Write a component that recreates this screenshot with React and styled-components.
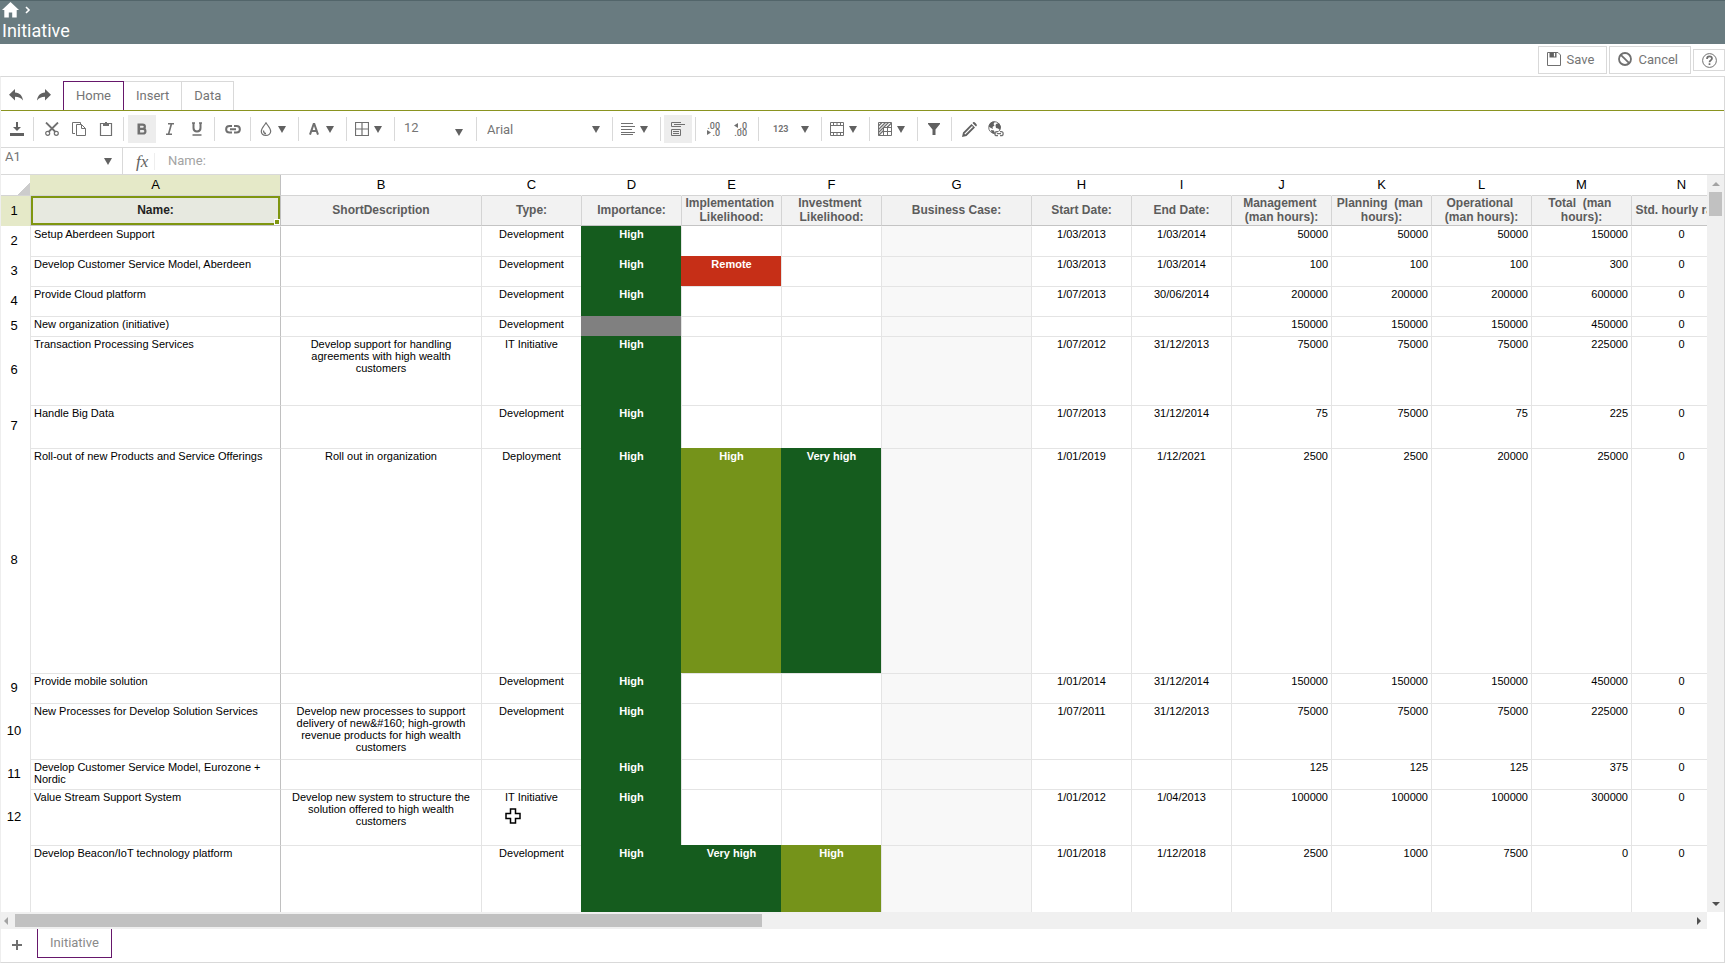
import React, { useState } from "react";
import styled, { createGlobalStyle } from "styled-components";

const GlobalStyle = createGlobalStyle`
  * {
    box-sizing: border-box;
  }

  body {
    margin: 0;
    background: #ffffff;
    color: #757575;
    font-family: Roboto, sans-serif;
    font-size: 13px;
  }

  button,
  input,
  select {
    margin: 0;
    padding: 0;
    border: 0;
    border-radius: 0;
    background: none;
    color: inherit;
    font: inherit;
  }
`;

const Page = styled.div`
  display: flex;
  flex-direction: column;
  height: 100vh;
  margin-right: 1px;
`;

const TopBar = styled.header`
  height: 44px;
  flex: none;
  background: #697b80;
  border-top: 1px solid #52656a;
  color: #ffffff;
`;

const Breadcrumb = styled.nav`
  display: flex;
  align-items: center;
  gap: 6px;
  height: 17px;
  padding-left: 2px;

  a {
    display: flex;
    color: inherit;
  }
`;

const Title = styled.h1`
  margin: 0;
  padding-left: 2px;
  font-size: 18px;
  font-weight: 400;
  line-height: 26px;
`;

const ActionBar = styled.div`
  display: flex;
  flex: none;
  align-items: center;
  justify-content: flex-end;
  gap: 2px;
  height: 32px;
`;

const ActionButton = styled.button`
  display: flex;
  align-items: center;
  gap: 6px;
  height: 28px;
  padding: 0 12px 2px 8px;
  border: 1px solid #d9d9d9;
`;

const HelpButton = styled.button`
  display: flex;
  align-items: center;
  justify-content: center;
  width: 32px;
  height: 22px;
  border: 1px solid #d9d9d9;
`;

const Spreadsheet = styled.main`
  display: flex;
  flex: 1;
  flex-direction: column;
  min-height: 0;
  border: 1px solid #d9d9d9;
  border-left-color: #eeeeee;
`;

const Ribbon = styled.div`
  display: flex;
  flex: none;
  align-items: flex-end;
  height: 34px;
  padding-left: 1px;
  border-bottom: 1px solid #8a9420;
`;

const RibbonIcon = styled.button`
  display: flex;
  align-items: center;
  justify-content: center;
  width: 28px;
  height: 31px;
`;

const RibbonTabs = styled.div`
  display: flex;
  margin-left: 5px;
`;

const RibbonTab = styled.button`
  height: 29px;
  padding: 0 12px 2px;
  border: 1px solid ${(props) => (props.$active ? "#66176b" : "#d9d9d9")};
  border-bottom: 0;
  ${(props) => !props.$active && "border-left: 0;"}
`;

const Toolbar = styled.div`
  display: flex;
  flex: none;
  align-items: center;
  height: 37px;
  border-bottom: 1px solid #d9d9d9;
`;

const Group = styled.div`
  display: flex;
  align-items: center;
  justify-content: center;
  height: 24px;
  padding: ${(props) => props.$pad || "0 3px"};
  border-right: ${(props) => (props.$last ? "0" : "1px solid #d9d9d9")};
`;

const Tool = styled.button`
  display: flex;
  align-items: center;
  justify-content: center;
  width: 27px;
  height: 28px;
  ${(props) => props.$active && "width: 28px; background: #ededed;"}
`;

const DropTool = styled.button`
  display: flex;
  align-items: center;
  gap: 5px;
  height: 28px;
  padding: 0 12px 0 8px;
`;

const NumberTool = styled(DropTool)`
  gap: 12px;
  padding: 0 12px 0 14px;
  font-size: 9px;
  font-weight: 700;
`;

const Combo = styled.label`
  display: grid;
  align-items: center;
  width: ${(props) => props.$width};
  height: 100%;

  select {
    grid-area: 1 / 1;
    width: 100%;
    padding: ${(props) => props.$pad};
    appearance: none;
    outline: none;
  }

  svg {
    grid-area: 1 / 1;
    justify-self: end;
    margin: ${(props) => props.$arrow};
    pointer-events: none;
  }
`;

const FormulaBar = styled.div`
  display: flex;
  flex: none;
  align-items: center;
  height: 27px;
  border-bottom: 1px solid #d9d9d9;
`;

const NameBox = styled.div`
  height: 100%;
  border-right: 1px solid #d9d9d9;
`;

const FxLabel = styled.label`
  width: 32px;
  padding-left: 13px;
  border-right: 1px solid #eeeeee;
  color: #616161;
  font-family: "Liberation Serif", serif;
  font-size: 17px;
  font-style: italic;
  line-height: 17px;
`;

const FormulaInput = styled.input`
  flex: 1;
  min-width: 0;
  padding: 0 0 1px 13px;
  color: #a3a3a3;
  outline: none;
`;

const SheetArea = styled.div`
  display: grid;
  flex: 1;
  grid-template-columns: minmax(0, 1fr) 17px;
  grid-template-rows: minmax(0, 1fr) 17px;
  min-height: 0;
`;

const SheetViewport = styled.div`
  position: relative;
  overflow: auto;
  scrollbar-width: none;
`;

const SheetTable = styled.table`
  width: 1730px;
  table-layout: fixed;
  border-collapse: separate;
  border-spacing: 0;
  color: #000000;
  font-family: "Liberation Sans", Arial, sans-serif;
  font-size: 11px;
  line-height: 12px;
`;

const ColumnHeader = styled.th`
  height: 21px;
  padding: 0;
  border-bottom: 1px solid #d4d4d4;
  border-left: 1px solid ${(props) => (props.$afterFreeze ? "#c0c0c0" : "transparent")};
  background: ${(props) => (props.$active ? "#e5e9c8" : "#ffffff")};
  font-size: 13px;
  font-weight: 400;
`;

const Corner = styled.td`
  height: 21px;
  padding: 0;
  border-bottom: 1px solid #d4d4d4;
  background: linear-gradient(135deg, transparent 50%, #cccccc 50%) right bottom / 12px 12px no-repeat;
`;

const RowHeader = styled.th`
  padding: 0 3px 1px 0;
  background: ${(props) => (props.$active ? "#e5e9c8" : "#ffffff")};
  font-size: 13px;
  font-weight: 400;
  vertical-align: middle;
`;

const Cell = styled.td`
  height: ${(props) => props.$height}px;
  padding: 1px 3px 0;
  border-top: 1px solid ${(props) => (props.$fill || props.$first ? "transparent" : "#e4e4e4")};
  border-left: 1px solid
    ${(props) => (props.$fill ? "transparent" : props.$afterFreeze ? "#c0c0c0" : "#e4e4e4")};
  background: ${(props) => props.$fill || (props.$readonly ? "#f8f8f8" : "#ffffff")};
  color: ${(props) => (props.$fill ? "#ffffff" : "#000000")};
  font-weight: ${(props) => (props.$fill ? 700 : 400)};
  text-align: ${(props) => props.$align || "center"};
  vertical-align: top;
  white-space: pre-line;
`;

const FieldCell = styled.td`
  position: relative;
  height: 30px;
  padding: 0 0 1px;
  border-bottom: 1px solid #c4c4c4;
  border-left: 1px solid ${(props) => (props.$afterFreeze ? "#c0c0c0" : "#d4d4d4")};
  background: ${(props) => (props.$active ? "#e7e9e0" : "#f2f2f2")};
  color: ${(props) => (props.$active ? "#222222" : "#5c5c5c")};
  font-size: 12px;
  font-weight: 700;
  line-height: 14px;
  text-align: center;
  vertical-align: middle;
  white-space: pre;
`;

const Selection = styled.div`
  position: absolute;
  inset: 0;
  border: 2px solid #7f9610;

  &::after {
    content: "";
    position: absolute;
    right: -2px;
    bottom: -2px;
    width: 4px;
    height: 4px;
    border: 1px solid #ffffff;
    background: #7f9610;
  }
`;

const CellCursor = styled.svg`
  position: absolute;
  top: 633px;
  left: 504px;
  pointer-events: none;
`;

const ScrollTrack = styled.div`
  display: flex;
  flex-direction: ${(props) => (props.$vertical ? "column" : "row")};
  align-items: center;
  background: #f0f0f0;
`;

const ScrollButton = styled.button`
  display: flex;
  flex: none;
  align-items: center;
  justify-content: center;
  width: ${(props) => (props.$vertical ? "17px" : "14px")};
  height: 17px;
`;

const ScrollThumb = styled.div`
  width: ${(props) => (props.$vertical ? "13px" : "43.8%")};
  height: ${(props) => (props.$vertical ? "24px" : "13px")};
  margin-bottom: ${(props) => (props.$vertical ? "auto" : "0")};
  margin-right: ${(props) => (props.$vertical ? "0" : "auto")};
  background: #c1c1c1;
`;

const SheetTabs = styled.footer`
  display: flex;
  flex: none;
  height: 33px;
`;

const AddSheet = styled.button`
  display: flex;
  align-items: center;
  justify-content: center;
  width: 32px;
  height: 31px;
  margin-right: 4px;
`;

const SheetTab = styled.button`
  height: 29px;
  padding: 0 12px 2px;
  border: 1px solid #66176b;
  border-top: 0;
  color: #8a8a8a;
`;

const Icon = ({ size = 14, box = 14, children }) => (
  <svg
    width={size}
    height={size}
    viewBox={`0 0 ${box} ${box}`}
    fill="none"
    stroke="#707070"
    strokeWidth="1"
    aria-hidden="true"
  >
    {children}
  </svg>
);

const Arrow = () => (
  <svg width="8" height="7" viewBox="0 0 8 7" fill="#616161" aria-hidden="true">
    <path d="M0 0h8L4 7z" />
  </svg>
);

const ScrollArrow = ({ d, color = "#505050" }) => (
  <svg width="8" height="8" viewBox="0 0 8 8" fill={color} aria-hidden="true">
    <path d={d} />
  </svg>
);

const icons = {
  undo: (
    <Icon>
      <path fill="#616161" stroke="none" d="M6 1v3.500c5 .4 7.300 3 8 8-2-2.700-4.200-3.800-8-3.800V12.500L0 6.700z" />
    </Icon>
  ),
  redo: (
    <Icon>
      <path fill="#616161" stroke="none" d="M8 1v3.500c-5 .4-7.300 3-8 8 2-2.700 4.200-3.800 8-3.800V12.500l6-5.800z" />
    </Icon>
  ),
  download: (
    <Icon>
      <path fill="#616161" stroke="none" d="M0 11h14v3H0zM6 0h2v5h3L7 9 3 5h3z" />
    </Icon>
  ),
  cut: (
    <Icon>
      <path strokeWidth="1.800" d="M1 .5l9.500 9.500M13 .5L3.500 10" />
      <circle cx="2.700" cy="11.300" r="2" strokeWidth="1.200" />
      <circle cx="11.300" cy="11.300" r="2" strokeWidth="1.200" />
    </Icon>
  ),
  copy: (
    <Icon>
      <path d="M3 11.500H.5V.5h8v1.500M4.500 2.500h5l4 4v7h-9zM9.500 2.500v4h4" />
    </Icon>
  ),
  paste: (
    <Icon>
      <path d="M4 1.500H1.500v12h11v-12H10" strokeWidth="1.200" />
      <path fill="#707070" stroke="none" d="M4 1h2V0h2v1h2v3H4z" />
    </Icon>
  ),
  bold: (
    <Icon>
      <path strokeWidth="2.200" d="M3.600 2.600h4c3 0 3 4.200 0 4.200h-4 4.400c3.200 0 3.200 4.700 0 4.700H3.600zM4 1.500v11" />
    </Icon>
  ),
  italic: (
    <Icon>
      <path strokeWidth="1.600" d="M5 1.800h6M3 12.200h6M8.400 2L5.600 12" />
    </Icon>
  ),
  underline: (
    <Icon>
      <path strokeWidth="2" d="M3.500 1v5c0 4.600 7 4.600 7 0V1" />
      <path strokeWidth="1.400" d="M2.500 13h9M2 1h3M9 1h3" />
    </Icon>
  ),
  link: (
    <Icon size={16} box={16}>
      <path strokeWidth="2" d="M7 5H4.500C0 5 0 11.500 4.500 11.500H7M9 5h2.500c4.500 0 4.500 6.500 0 6.500H9M5 8.200h6" />
    </Icon>
  ),
  fill: (
    <Icon>
      <path strokeWidth="1.200" d="M7 .8C5 4 2.300 6.500 2.300 9.200c0 5.600 9.400 5.600 9.400 0C11.700 6.500 9 4 7 .8zM4.500 8.500c0 2 1 3 2.500 3.200" />
    </Icon>
  ),
  color: (
    <Icon>
      <path strokeWidth="2" d="M3 12.700L6.700 2h.6L11 12.700M4.300 9h5.400" />
    </Icon>
  ),
  borders: (
    <Icon>
      <path d="M.5.5h13v13H.5zM7 .5v13M.5 7h13" strokeWidth="1.200" />
    </Icon>
  ),
  align: (
    <Icon>
      <path d="M0 1.500h12M0 4.500h14M0 7.500h11M0 10.500h14M0 12.500h12" />
    </Icon>
  ),
  wrap: (
    <Icon>
      <path d="M10 .5H.5v4H10M3 2.500h11M.5 7.500h9v6h-9zM2 9.500h6M2 11.500h6" />
    </Icon>
  ),
  filmstrip: (
    <Icon>
      <path d="M.5.500h13v13H.5zM.5 3.500h13M.5 10.500h13M3.500.5v3M7 .5v3M10.500.5v3M3.500 10.500v3M7 10.500v3M10.500 10.500v3" />
    </Icon>
  ),
  conditional: (
    <Icon>
      <path d="M.5.500h13v13H.5zM5.500 5.500v8M5.500 5.500h8M9.500 4v9.500M5 9.500h8.500" />
      <path strokeWidth="1.300" d="M.5 4l3.500-3.500M.5 7.500l7-7M.5 10.500l5-5M.5 13.500l5-5M5.500 5.500l5-5M9 5.500l4.500-4.500" />
    </Icon>
  ),
  filter: (
    <Icon>
      <path fill="#616161" stroke="none" d="M1 1h12v1L8.500 7.500V13H5.500V7.500L1 2z" />
    </Icon>
  ),
  pencil: (
    <Icon size={15} box={15}>
      <path fill="#616161" stroke="none" d="M0 15l1-4.500L9.500 2 13 5.500 4.500 14zM10.500 1l.7-.7c1-1 4.500 2.500 3.500 3.500L14 4.500z" />
      <path stroke="#ffffff" strokeWidth="1.200" d="M2.800 12.200l7.700-7.700" />
    </Icon>
  ),
  globe: (
    <Icon size={16} box={16}>
      <circle cx="6.500" cy="6.500" r="5.800" />
      <path fill="#616161" stroke="none" d="M1 4c1-3 4-4 6-3.500L5.500 3l1 1.500L4.500 6 5 8 3 7 1 6zM8 3l3-1 2 4-1 3-2-1.500L8 7 7.500 4.500zM3 9l3 .5L7 13C5 13 3 11.500 3 9z" />
      <path stroke="#ffffff" strokeWidth="4" d="M8.500 12.800h4.500" />
      <path strokeWidth="1.200" d="M10 10.700H8.800c-2.600 0-2.600 4 0 4H10M12 10.700h1.200c2.600 0 2.600 4 0 4H12M9 12.700h4" />
    </Icon>
  ),
  save: (
    <Icon>
      <path d="M.5.500h10.500l2.500 2.500v10.500H.5z" />
      <path fill="#616161" stroke="none" d="M2.500.5h7v5h-7z" />
      <path stroke="#ffffff" strokeWidth="1.200" d="M7.500 1v3.500" />
    </Icon>
  ),
  cancel: (
    <Icon>
      <circle cx="7" cy="7" r="6" strokeWidth="1.800" />
      <path strokeWidth="1.800" d="M2.800 2.800l8.400 8.400" />
    </Icon>
  ),
  help: (
    <Icon size={15} box={15}>
      <circle cx="7.500" cy="7.500" r="6.900" />
      <path strokeWidth="1.700" d="M5 6c0-3.600 5-3.200 5-.4C10 7.300 7.500 7.200 7.500 9.200M7.500 10.200v1.800" />
    </Icon>
  ),
  plus: (
    <Icon size={10} box={10}>
      <path strokeWidth="2" d="M5 0v10M0 5h10" />
    </Icon>
  ),
};

// ".00" over ".0" (and back) with a small pointer next to the short value
const DecimalSvg = styled.svg`
  font-family: Roboto, sans-serif;
  font-size: 9px;
  font-weight: 500;
`;

const DecimalIcon = ({ increase }) => (
  <DecimalSvg width="14" height="15" viewBox="0 0 14 15" fill="#707070" aria-hidden="true">
    <text x="13" y="7" textAnchor="end">{increase ? ".0" : ".00"}</text>
    <text x="13" y="14" textAnchor="end">{increase ? ".00" : ".0"}</text>
    <path d={increase ? "M4 1v5L0 3.500z" : "M0 8v5l4-2.500z"} />
  </DecimalSvg>
);

const GREEN = "#155c1e";
const OLIVE = "#75931a";
const RED = "#c62f17";
const GREY = "#808080";

const levels = {
  High: GREEN,
  "Very high": GREEN,
  Remote: RED,
};

const columns = [
  { id: "A", width: 250, field: "Name:", align: "left" },
  { id: "B", width: 201, field: "ShortDescription" },
  { id: "C", width: 100, field: "Type:" },
  { id: "D", width: 100, field: "Importance:" },
  { id: "E", width: 100, field: "Implementation\u00a0\nLikelihood:" },
  { id: "F", width: 100, field: "Investment\u00a0\nLikelihood:" },
  { id: "G", width: 150, field: "Business Case:", readonly: true },
  { id: "H", width: 100, field: "Start Date:" },
  { id: "I", width: 100, field: "End Date:" },
  { id: "J", width: 100, field: "Management\u00a0\n(man hours):", align: "right" },
  { id: "K", width: 100, field: "Planning  (man\u00a0\nhours):", align: "right" },
  { id: "L", width: 100, field: "Operational\u00a0\n(man hours):", align: "right" },
  { id: "M", width: 100, field: "Total  (man\u00a0\nhours):", align: "right" },
  { id: "N", width: 100, field: "Std. hourly rate:" },
];

const rows = [
  { height: 30, values: ["Setup Aberdeen Support", "", "Development", "High", "", "", "", "1/03/2013", "1/03/2014", 50000, 50000, 50000, 150000, 0] },
  { height: 30, values: ["Develop Customer Service Model, Aberdeen", "", "Development", "High", "Remote", "", "", "1/03/2013", "1/03/2014", 100, 100, 100, 300, 0] },
  { height: 30, values: ["Provide Cloud platform", "", "Development", "High", "", "", "", "1/07/2013", "30/06/2014", 200000, 200000, 200000, 600000, 0] },
  { height: 20, values: ["New organization (initiative)", "", "Development", "", "", "", "", "", "", 150000, 150000, 150000, 450000, 0], fills: { D: GREY } },
  { height: 69, values: ["Transaction Processing Services", "Develop support for handling\nagreements with high wealth\ncustomers", "IT Initiative", "High", "", "", "", "1/07/2012", "31/12/2013", 75000, 75000, 75000, 225000, 0] },
  { height: 43, values: ["Handle Big Data", "", "Development", "High", "", "", "", "1/07/2013", "31/12/2014", 75, 75000, 75, 225, 0] },
  { height: 225, values: ["Roll-out of new Products and Service Offerings", "Roll out in organization", "Deployment", "High", "High", "Very high", "", "1/01/2019", "1/12/2021", 2500, 2500, 20000, 25000, 0], fills: { E: OLIVE } },
  { height: 30, values: ["Provide mobile solution", "", "Development", "High", "", "", "", "1/01/2014", "31/12/2014", 150000, 150000, 150000, 450000, 0] },
  { height: 56, values: ["New Processes for Develop Solution Services", "Develop new processes to support\ndelivery of new&#160; high-growth\nrevenue products for high wealth\ncustomers", "Development", "High", "", "", "", "1/07/2011", "31/12/2013", 75000, 75000, 75000, 225000, 0] },
  { height: 30, values: ["Develop Customer Service Model, Eurozone +\nNordic", "", "", "High", "", "", "", "", "", 125, 125, 125, 375, 0] },
  { height: 56, values: ["Value Stream Support System", "Develop new system to structure the\nsolution offered to high wealth\ncustomers", "IT Initiative", "High", "", "", "", "1/01/2012", "1/04/2013", 100000, 100000, 100000, 300000, 0] },
  { height: 225, values: ["Develop Beacon/IoT technology platform", "", "Development", "High", "Very high", "High", "", "1/01/2018", "1/12/2018", 2500, 1000, 7500, 0, 0], fills: { F: OLIVE } },
];

const DropButton = ({ label, icon }) => (
  <DropTool type="button" aria-label={label}>
    {icon}
    <Arrow />
  </DropTool>
);

const Sheet = () => (
  <SheetTable>
    <colgroup>
      <col style={{ width: 29 }} />
      {columns.map((column) => (
        <col key={column.id} style={{ width: column.width }} />
      ))}
    </colgroup>
    <thead>
      <tr>
        <Corner />
        {columns.map(({ id }) => (
          <ColumnHeader key={id} scope="col" $active={id === "A"} $afterFreeze={id === "B"}>
            {id}
          </ColumnHeader>
        ))}
      </tr>
    </thead>
    <tbody>
      <tr>
        <RowHeader scope="row" $active>
          1
        </RowHeader>
        {columns.map(({ id, field }) => (
          <FieldCell key={id} $active={id === "A"} $afterFreeze={id === "B"}>
            {field}
            {id === "A" && <Selection />}
          </FieldCell>
        ))}
      </tr>
      {rows.map(({ height, values, fills = {} }, rowIndex) => (
        <tr key={values[0]}>
          <RowHeader scope="row">{rowIndex + 2}</RowHeader>
          {columns.map(({ id, align, readonly }, index) => (
            <Cell
              key={id}
              $height={height}
              $align={align}
              $readonly={readonly}
              $first={rowIndex === 0}
              $afterFreeze={id === "B"}
              $fill={fills[id] || levels[values[index]]}
            >
              {values[index]}
            </Cell>
          ))}
        </tr>
      ))}
    </tbody>
  </SheetTable>
);

const App = () => {
  const [activeTab, setActiveTab] = useState("Home");

  return (
    <>
      <GlobalStyle />
      <Page>
        <TopBar>
          <Breadcrumb aria-label="Breadcrumb">
            <a href="#home" aria-label="Home">
              <svg width="17" height="16" viewBox="0 0 17 16" fill="#ffffff" aria-hidden="true">
                <path d="M8.500 0L17 8h-2.300v7.500h-4.500v-5H6.800v5H2.300V8H0z" />
              </svg>
            </a>
            <svg width="6" height="8" viewBox="0 0 6 8" fill="none" stroke="#ffffff" strokeWidth="1.600" aria-hidden="true">
              <path d="M1 1l3 3-3 3" />
            </svg>
          </Breadcrumb>
          <Title>Initiative</Title>
        </TopBar>

        <ActionBar>
          <ActionButton type="button">
            {icons.save}
            Save
          </ActionButton>
          <ActionButton type="button">
            {icons.cancel}
            Cancel
          </ActionButton>
          <HelpButton type="button" aria-label="Help">
            {icons.help}
          </HelpButton>
        </ActionBar>

        <Spreadsheet>
          <Ribbon>
            <RibbonIcon type="button" aria-label="Undo">{icons.undo}</RibbonIcon>
            <RibbonIcon type="button" aria-label="Redo">{icons.redo}</RibbonIcon>
            <RibbonTabs>
              {["Home", "Insert", "Data"].map((tab) => (
                <RibbonTab
                  key={tab}
                  type="button"
                  $active={tab === activeTab}
                  onClick={() => setActiveTab(tab)}
                >
                  {tab}
                </RibbonTab>
              ))}
            </RibbonTabs>
          </Ribbon>

          <Toolbar>
            <Group $pad="0 3px 0 2px">
              <Tool type="button" aria-label="Download">{icons.download}</Tool>
            </Group>
            <Group $pad="0 4px">
              <Tool type="button" aria-label="Cut">{icons.cut}</Tool>
              <Tool type="button" aria-label="Copy">{icons.copy}</Tool>
              <Tool type="button" aria-label="Paste">{icons.paste}</Tool>
            </Group>
            <Group $pad="0 4px">
              <Tool type="button" aria-label="Bold" $active>{icons.bold}</Tool>
              <Tool type="button" aria-label="Italic">{icons.italic}</Tool>
              <Tool type="button" aria-label="Underline">{icons.underline}</Tool>
            </Group>
            <Group $pad="0 4px">
              <Tool type="button" aria-label="Hyperlink">{icons.link}</Tool>
            </Group>
            <Group $pad="0">
              <DropButton label="Fill color" icon={icons.fill} />
            </Group>
            <Group $pad="0">
              <DropButton label="Text color" icon={icons.color} />
            </Group>
            <Group $pad="0">
              <DropButton label="Borders" icon={icons.borders} />
            </Group>
            <Group $pad="0">
              <Combo $width="81px" $pad="0 0 4px 9px" $arrow="6px 13px 0 0">
                <select aria-label="Font size" defaultValue="12">
                  <option>12</option>
                </select>
                <Arrow />
              </Combo>
            </Group>
            <Group $pad="0">
              <Combo $width="135px" $pad="0 0 0 10px" $arrow="0 12px 0 0">
                <select aria-label="Font family" defaultValue="Arial">
                  <option>Arial</option>
                </select>
                <Arrow />
              </Combo>
            </Group>
            <Group $pad="0">
              <DropButton label="Alignment" icon={icons.align} />
            </Group>
            <Group>
              <Tool type="button" aria-label="Wrap text" $active>{icons.wrap}</Tool>
            </Group>
            <Group $pad="0 4px">
              <Tool type="button" aria-label="Decrease decimals"><DecimalIcon /></Tool>
              <Tool type="button" aria-label="Increase decimals"><DecimalIcon increase /></Tool>
            </Group>
            <Group $pad="0">
              <NumberTool type="button">
                123
                <Arrow />
              </NumberTool>
            </Group>
            <Group $pad="0">
              <DropButton label="Merge" icon={icons.filmstrip} />
            </Group>
            <Group $pad="0">
              <DropButton label="Conditional formatting" icon={icons.conditional} />
            </Group>
            <Group>
              <Tool type="button" aria-label="Filter">{icons.filter}</Tool>
            </Group>
            <Group $pad="0 4px" $last>
              <Tool type="button" aria-label="Edit">{icons.pencil}</Tool>
              <Tool type="button" aria-label="Web link">{icons.globe}</Tool>
            </Group>
          </Toolbar>

          <FormulaBar>
            <NameBox>
              <Combo $width="121px" $pad="0 0 9px 4px" $arrow="0 10px 0 0">
                <select aria-label="Cell reference" defaultValue="A1">
                  <option>A1</option>
                </select>
                <Arrow />
              </Combo>
            </NameBox>
            <FxLabel htmlFor="formula">fx</FxLabel>
            <FormulaInput id="formula" defaultValue="Name:" />
          </FormulaBar>

          <SheetArea>
            <SheetViewport>
              <Sheet />
              <CellCursor width="16" height="16" viewBox="0 0 16 16" aria-hidden="true">
                <path d="M5.500 1h5v4.500H15v5h-4.500V15h-5v-4.500H1v-5h4.500z" fill="#ffffff" stroke="#000000" strokeWidth="1.500" />
              </CellCursor>
            </SheetViewport>
            <ScrollTrack $vertical>
              <ScrollButton type="button" aria-label="Scroll up" $vertical>
                <ScrollArrow d="M0 6l4-4 4 4z" color="#a3a3a3" />
              </ScrollButton>
              <ScrollThumb $vertical />
              <ScrollButton type="button" aria-label="Scroll down" $vertical>
                <ScrollArrow d="M0 2h8L4 6z" />
              </ScrollButton>
            </ScrollTrack>
            <ScrollTrack>
              <ScrollButton type="button" aria-label="Scroll left">
                <ScrollArrow d="M4 0v8L0 4z" color="#a3a3a3" />
              </ScrollButton>
              <ScrollThumb />
              <ScrollButton type="button" aria-label="Scroll right">
                <ScrollArrow d="M1 0v8l4-4z" />
              </ScrollButton>
            </ScrollTrack>
          </SheetArea>

          <SheetTabs>
            <AddSheet type="button" aria-label="Add sheet">{icons.plus}</AddSheet>
            <SheetTab type="button">Initiative</SheetTab>
          </SheetTabs>
        </Spreadsheet>
      </Page>
    </>
  );
};

export default App;
